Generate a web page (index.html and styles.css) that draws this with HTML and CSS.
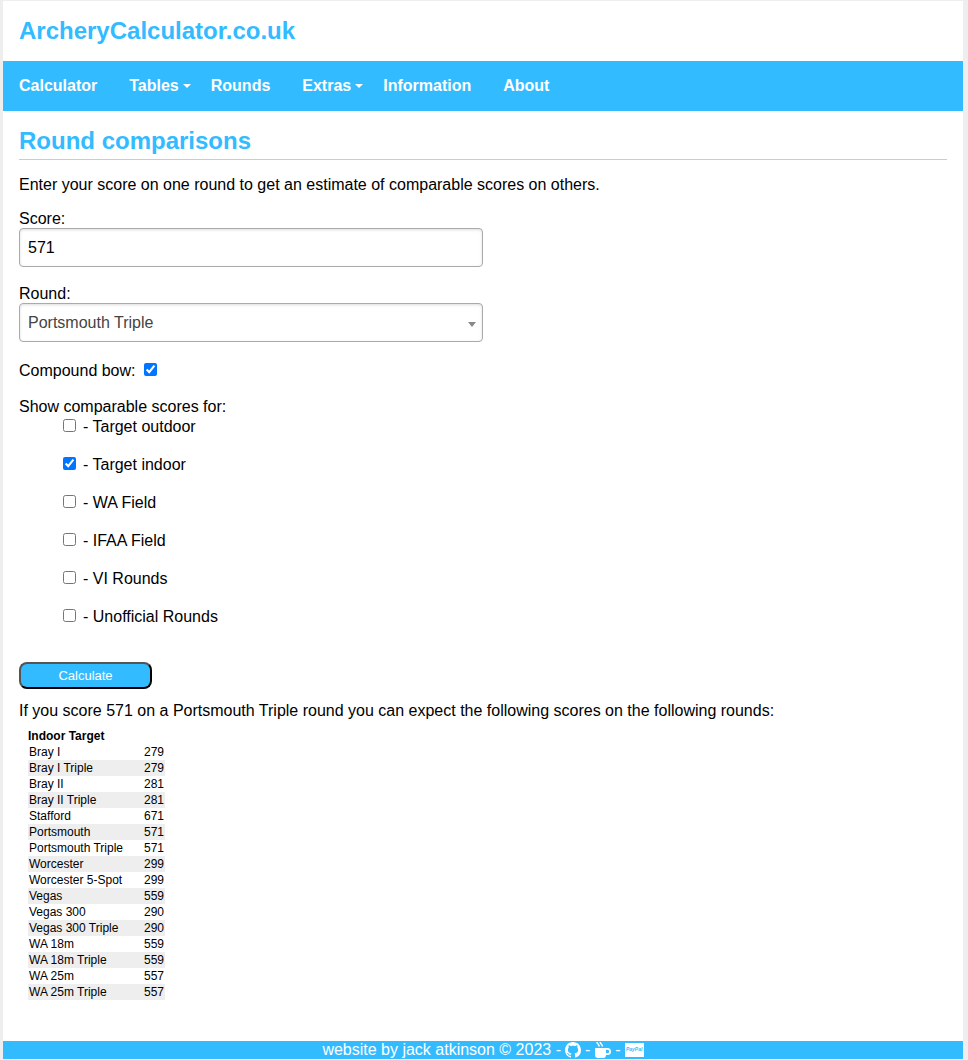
FILE: index.html
```html
<!DOCTYPE html>
<html lang="en">
<head>
<meta charset="utf-8">
<title>Round comparisons - ArcheryCalculator.co.uk</title>
<link rel="stylesheet" href="styles.css">
</head>
<body>
<div class="page">
  <header class="masthead"><a class="site-name" href="#">ArcheryCalculator.co.uk</a></header>
  <nav class="menu">
    <a class="menu-link" href="#">Calculator</a>
    <a class="menu-link has-children" href="#">Tables</a>
    <a class="menu-link" href="#">Rounds</a>
    <a class="menu-link has-children" href="#">Extras</a>
    <a class="menu-link" href="#">Information</a>
    <a class="menu-link" href="#">About</a>
  </nav>
  <main class="content">
    <h1 class="title">Round comparisons</h1>
    <p class="intro">Enter your score on one round to get an estimate of comparable scores on others.</p>
    <form class="form">
      <div class="field">
        <label for="score">Score:</label>
        <input class="control" id="score" type="text" value="571">
      </div>
      <div class="field">
        <label for="round">Round:</label>
        <div class="select-wrap">
          <select class="control select" id="round"><option>Portsmouth Triple</option></select>
          <svg class="arrow" viewBox="0 0 8 5" aria-hidden="true"><path d="M0 0h8L4 5z"/></svg>
        </div>
      </div>
      <div class="compound">
        <label for="compound">Compound bow:</label>
        <input class="tick" id="compound" type="checkbox" checked>
      </div>
      <fieldset class="types">
        <legend class="legend">Show comparable scores for:</legend>
        <div class="option"><input class="tick" id="outdoor" type="checkbox"><label for="outdoor">- Target outdoor</label></div>
        <div class="option"><input class="tick" id="indoor" type="checkbox" checked><label for="indoor">- Target indoor</label></div>
        <div class="option"><input class="tick" id="wafield" type="checkbox"><label for="wafield">- WA Field</label></div>
        <div class="option"><input class="tick" id="ifaa" type="checkbox"><label for="ifaa">- IFAA Field</label></div>
        <div class="option"><input class="tick" id="vi" type="checkbox"><label for="vi">- VI Rounds</label></div>
        <div class="option"><input class="tick" id="unofficial" type="checkbox"><label for="unofficial">- Unofficial Rounds</label></div>
      </fieldset>
      <button class="calculate" type="button">Calculate</button>
    </form>
    <p class="summary">If you score 571 on a Portsmouth Triple round you can expect the following scores on the following rounds:</p>
    <table class="results">
      <thead><tr><th colspan="2">Indoor Target</th></tr></thead>
      <tbody>
        <tr><td>Bray I</td><td>279</td></tr>
        <tr><td>Bray I Triple</td><td>279</td></tr>
        <tr><td>Bray II</td><td>281</td></tr>
        <tr><td>Bray II Triple</td><td>281</td></tr>
        <tr><td>Stafford</td><td>671</td></tr>
        <tr><td>Portsmouth</td><td>571</td></tr>
        <tr><td>Portsmouth Triple</td><td>571</td></tr>
        <tr><td>Worcester</td><td>299</td></tr>
        <tr><td>Worcester 5-Spot</td><td>299</td></tr>
        <tr><td>Vegas</td><td>559</td></tr>
        <tr><td>Vegas 300</td><td>290</td></tr>
        <tr><td>Vegas 300 Triple</td><td>290</td></tr>
        <tr><td>WA 18m</td><td>559</td></tr>
        <tr><td>WA 18m Triple</td><td>559</td></tr>
        <tr><td>WA 25m</td><td>557</td></tr>
        <tr><td>WA 25m Triple</td><td>557</td></tr>
      </tbody>
    </table>
  </main>
  <footer class="footer">
    <span>website by jack atkinson © 2023 -</span>
    <a class="icon-link" href="#" aria-label="GitHub"><svg class="icon-github" viewBox="0 0 16 16"><path d="M8 0C3.58 0 0 3.58 0 8c0 3.54 2.29 6.53 5.47 7.59.4.07.55-.17.55-.38 0-.19-.01-.82-.01-1.49-2.01.37-2.53-.49-2.69-.94-.09-.23-.48-.94-.82-1.13-.28-.15-.68-.52-.01-.53.63-.01 1.08.58 1.23.82.72 1.21 1.87.87 2.33.66.07-.52.28-.87.51-1.07-1.78-.2-3.64-.89-3.64-3.95 0-.87.31-1.59.82-2.15-.08-.2-.36-1.02.08-2.12 0 0 .67-.21 2.2.82.64-.18 1.32-.27 2-.27s1.36.09 2 .27c1.53-1.04 2.2-.82 2.2-.82.44 1.1.16 1.92.08 2.12.51.56.82 1.27.82 2.15 0 3.07-1.87 3.75-3.65 3.95.29.25.54.73.54 1.48 0 1.07-.01 1.93-.01 2.2 0 .21.15.46.55.38A8.01 8.01 0 0 0 16 8c0-4.42-3.58-8-8-8z"/></svg></a>
    <span>-</span>
    <a class="icon-link" href="#" aria-label="Buy me a coffee"><svg class="icon-cup" viewBox="0 0 17 16"><path d="M1 6h12.500a3.500 3.500 0 0 1 0 7H12c0 1.800-1 3-3 3H4c-2 0-3-1.200-3-3zM12 7.800v3.400h1.500a1.700 1.700 0 0 0 0-3.400z" fill-rule="evenodd"/><path class="steam" d="M3 0c0 2 2.200 2 2.200 4.600M6.200 0c0 2 2.200 2 2.200 4.600"/></svg></a>
    <span>-</span>
    <a class="icon-link" href="#" aria-label="PayPal"><span class="card">PayPal</span></a>
  </footer>
</div>
</body>
</html>
```
FILE: styles.css
```css
* { box-sizing: border-box; }
body {
  margin: 0;
  padding: 1px 5px 1px 3px;
  background: #eee;
  color: #000;
  font: 16px/18px "Liberation Sans", Arial, sans-serif;
}
.page { background: #fff; }
.masthead { padding: 16px; }
.site-name {
  display: block;
  color: #3bf;
  font-size: 24px;
  line-height: 28px;
  font-weight: bold;
  text-decoration: none;
}
.menu {
  display: flex;
  min-height: 50px;
  align-items: center;
  background: #3bf;
}
.menu-link {
  padding: 0 16px;
  color: #fff;
  font-weight: bold;
  text-decoration: none;
}
.has-children {
  display: flex;
  align-items: center;
  gap: 4px;
  padding-right: 4px;
}
.has-children::after {
  content: "";
  border: 4px solid transparent;
  border-top-color: #fff;
  border-bottom: 0;
}
.content { padding: 16px 16px 41px; }
.title {
  margin: 0 0 16px;
  padding-bottom: 4px;
  border-bottom: 1px solid #ccc;
  color: #3bf;
  font-size: 24px;
  line-height: 28px;
}
.intro { margin: 0 0 16px; }
.field { max-width: 464px; margin-bottom: 18px; }
.field label { display: block; }
.control {
  display: block;
  width: 100%;
  height: 39px;
  padding: 0 8px;
  border: 1px solid #aaa;
  border-radius: 4px;
  background: #fff;
  box-shadow: inset 0 1px 3px #ddd;
  color: #000;
  font: inherit;
}
.select-wrap { position: relative; }
.select { appearance: none; padding-top: 1px; color: #444; }
.arrow {
  position: absolute;
  right: 7px;
  top: 19px;
  width: 8px;
  height: 5px;
  fill: #888;
  pointer-events: none;
}
.tick { width: 13px; height: 13px; margin: 0; }
.compound {
  display: flex;
  gap: 8px;
  margin: 20px 0 18px;
}
.compound .tick { margin-top: 1px; }
.types { margin: 0; padding: 0; border: 0; }
.legend { padding: 0 0 2px; }
.option {
  display: flex;
  gap: 7px;
  padding: 0 0 20px 44px;
}
.option .tick { margin-top: 1px; }
.calculate {
  display: block;
  width: 133px;
  height: 27px;
  margin: 16px 0 13px;
  border: 2px outset #000;
  border-radius: 8px;
  background: #3bf;
  color: #fff;
  font: 13px "Liberation Sans", Arial, sans-serif;
}
.summary { margin: 0 0 9px; }
.results {
  width: 137px;
  margin-left: 9px;
  border-collapse: collapse;
  font-size: 12px;
  line-height: 16px;
}
.results th { padding: 0; text-align: left; line-height: 15px; }
.results td { padding: 0 1px; }
.results td:last-child { text-align: right; }
.results tbody tr:nth-child(even) { background: #eee; }
.footer {
  display: flex;
  justify-content: center;
  gap: 4px;
  background: #3bf;
  color: #fff;
}
.icon-link { display: flex; align-items: center; color: #fff; text-decoration: none; }
.icon-link svg { fill: currentColor; }
.icon-github { width: 16px; height: 16px; }
.icon-cup { width: 17px; height: 16px; }
.steam { fill: none; stroke: currentColor; stroke-width: 1.500; }
.card {
  width: 19px;
  height: 14px;
  background: #fff;
  color: #3bf;
  font-size: 5px;
  font-weight: bold;
  font-style: italic;
  line-height: 13px;
  text-align: center;
}
```
